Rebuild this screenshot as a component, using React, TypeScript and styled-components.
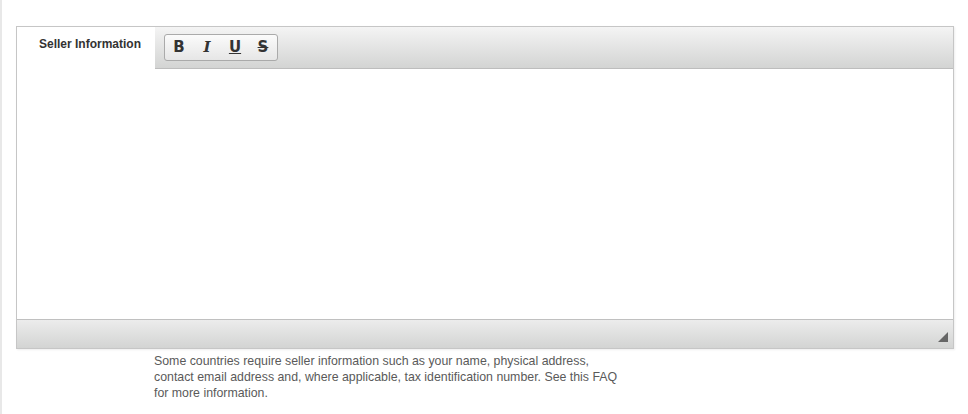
import React from 'react'
import styled, { createGlobalStyle } from 'styled-components'

const GlobalStyle = createGlobalStyle`
    html, body {
        margin: 0;
        padding: 0;
        background: #fff;
    }
    body {
        font-family: "Liberation Sans", Arial, sans-serif;
    }
`

const Page = styled.div`
    min-height: 414px;
    box-sizing: border-box;
    border-left: 2px solid #e8e8e8;
    padding: 26px 0 0 14px;
`
const Field = styled.div`
    width: 938px;
`
const Box = styled.div`
    box-sizing: border-box;
    border: 1px solid #c6c6c6;
    box-shadow: 1px 1px 2px rgba(0, 0, 0, 0.07);
    display: flex;
    flex-direction: column;
`
const Head = styled.div`
    display: flex;
    flex-direction: row;
`
const Label = styled.div`
    width: 138px;
    box-sizing: border-box;
    padding: 9px 14px 0 0;
    text-align: right;
    font-size: 12px;
    line-height: 16px;
    font-weight: bold;
    color: #333;
    background: #fff;
`
const Toolbar = styled.div`
    flex: 1;
    height: 42px;
    box-sizing: border-box;
    padding: 7px 0 0 9px;
    background: linear-gradient(to bottom, #f4f4f4, #d3d4d3);
    border-bottom: 1px solid #bdbdbd;
`
const ButtonGroup = styled.div`
    display: inline-flex;
    height: 27px;
    box-sizing: border-box;
    border: 1px solid #aaa;
    border-radius: 3px;
    background: linear-gradient(to bottom, #fbfbfb, #e6e6e6);
`
const ToolButton = styled.button<{ $serif?: boolean; $under?: boolean; $strike?: boolean }>`
    width: 28px;
    height: 25px;
    padding: 0;
    border: 0;
    background: transparent;
    color: #333;
    font-family: ${p => p.$serif ? `"DejaVu Serif", serif` : `"DejaVu Sans", sans-serif`};
    font-size: 15px;
    line-height: 25px;
    font-weight: bold;
    font-style: ${p => p.$serif ? 'italic' : 'normal'};
    text-decoration: ${p => p.$under ? 'underline' : p.$strike ? 'line-through' : 'none'};
    cursor: pointer;
`
const Editor = styled.div`
    height: 250px;
    background: #fff;
`
const StatusBar = styled.div`
    position: relative;
    height: 28px;
    border-top: 1px solid #c0c0c0;
    background: linear-gradient(to bottom, #ececec, #d3d4d3);
`
const Grip = styled.div`
    position: absolute;
    right: 5px;
    bottom: 6px;
    width: 0;
    height: 0;
    border-left: 10px solid transparent;
    border-bottom: 10px solid #666;
`
const Help = styled.div`
    margin: 4px 0 0 138px;
    width: 470px;
    font-size: 12.35px;
    line-height: 16px;
    color: #5a5a5a;
`

export default function App() {
    return <Page>
        <GlobalStyle />
        <Field>
            <Box>
                <Head>
                    <Label>Seller Information</Label>
                    <Toolbar>
                        <ButtonGroup>
                            <ToolButton>B</ToolButton>
                            <ToolButton $serif>I</ToolButton>
                            <ToolButton $under>U</ToolButton>
                            <ToolButton $strike>S</ToolButton>
                        </ButtonGroup>
                    </Toolbar>
                </Head>
                <Editor />
                <StatusBar>
                    <Grip />
                </StatusBar>
            </Box>
            <Help>
                Some countries require seller information such as your name, physical address,
                contact email address and, where applicable, tax identification number. See this FAQ
                for more information.
            </Help>
        </Field>
    </Page>
}
